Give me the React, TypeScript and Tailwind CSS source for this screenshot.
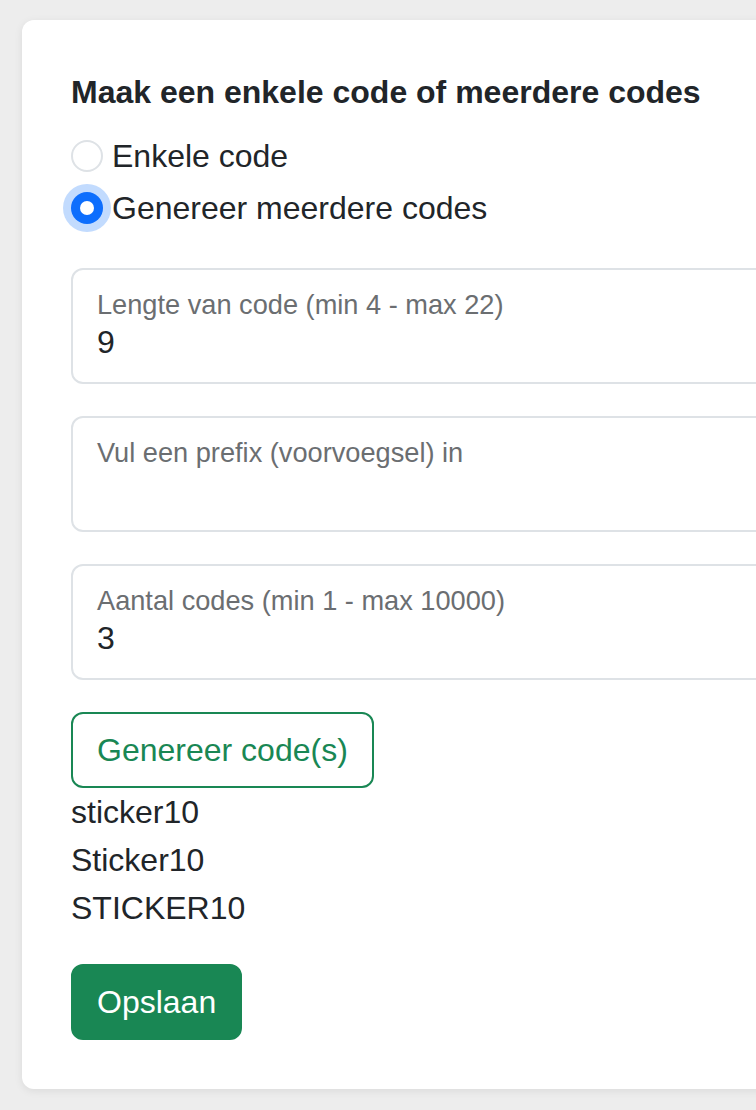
const FloatingInput = ({ label, value }: { label: string; value?: string }) => {
  return (
    <div className="h-[116px] w-full rounded-[12px] border-2 border-[#dee2e6] bg-white pl-[24px] pt-[19px]">
      <p className="text-[27.2px] leading-[32px] text-[#6b6e71]">{label}</p>
      <p className="mt-[3px] text-[32px] leading-[36px] text-[#212529]">{value}</p>
    </div>
  )
}

const Radio = ({ label, checked }: { label: string; checked?: boolean }) => {
  return (
    <div className="flex h-[48px] items-center mb-[4px]">
      {checked ? (
        <span className="flex size-[32px] items-center justify-center rounded-full bg-[#0d6efd] shadow-[0_0_0_8px_rgba(13,110,253,0.25)]">
          <span className="size-[14px] rounded-full bg-white"></span>
        </span>
      ) : (
        <span className="size-[32px] rounded-full border-2 border-[#dee2e6] bg-white"></span>
      )}
      <span className="ml-[9px] text-[32px] leading-[48px] text-[#212529]">{label}</span>
    </div>
  )
}

const App = () => {
  const codes = ['sticker10', 'Sticker10', 'STICKER10']

  return (
    <div className="h-[1110px] w-[756px] overflow-hidden bg-[#ededed] pt-[20px] pl-[22px] font-['Liberation_Sans',Arial,sans-serif]">
      <div className="w-[900px] rounded-[12px] bg-white pt-[48px] pb-[49px] pl-[49px] pr-[49px] shadow-[0_2px_8px_rgba(0,0,0,0.08)]">
        <p className="mb-[16px] text-[32px] font-bold leading-[48px] text-[#212529]">Maak een enkele code of meerdere codes</p>

        <Radio label="Enkele code" />
        <Radio label="Genereer meerdere codes" checked />

        <div className="mt-[36px] flex flex-col gap-[32px]">
          <FloatingInput label="Lengte van code (min 4 - max 22)" value="9" />
          <FloatingInput label="Vul een prefix (voorvoegsel) in" />
          <FloatingInput label="Aantal codes (min 1 - max 10000)" value="3" />
        </div>

        <button className="mt-[32px] rounded-[12px] border-2 border-[#198754] bg-white px-[24px] py-[12px] text-[32px] leading-[48px] text-[#198754]">
          Genereer code(s)
        </button>

        <div className="flex flex-col">
          {codes.map((code) => (
            <p key={code} className="text-[32px] leading-[48px] text-[#212529]">{code}</p>
          ))}
        </div>

        <button className="mt-[32px] rounded-[12px] border-2 border-[#198754] bg-[#198754] px-[24px] py-[12px] text-[32px] leading-[48px] text-white">
          Opslaan
        </button>
      </div>
    </div>
  )
}

export default App
